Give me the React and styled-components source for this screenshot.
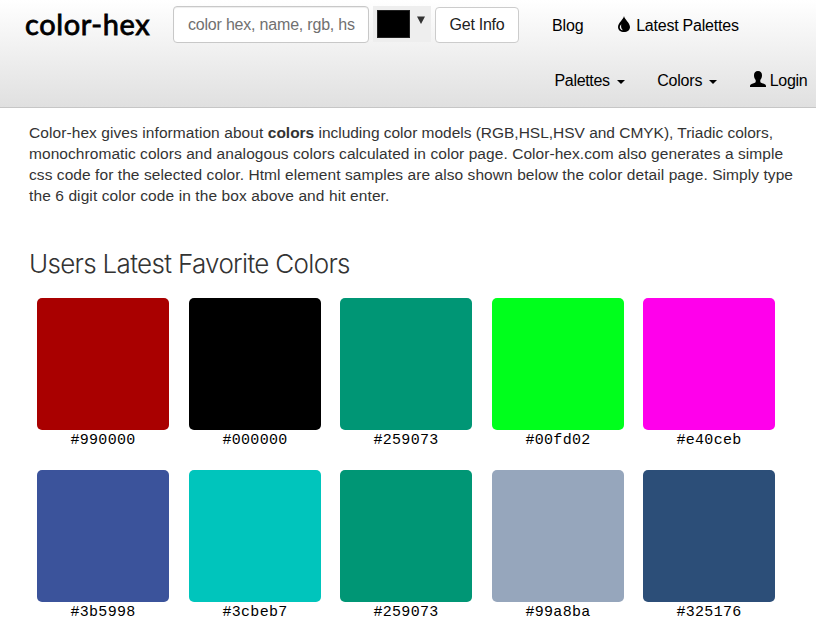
import React from "react";
import styled, { createGlobalStyle } from "styled-components";

const GlobalStyle = createGlobalStyle`
  * { box-sizing: border-box; }
  body {
    margin: 0;
    background: #fff;
    color: #333;
    font: 15.5px/21px "Liberation Sans", Arial, sans-serif;
    overflow: hidden;
  }
`;

const Page = styled.div`
  width: 816px;
  height: 630px;
  overflow: hidden;
`;

const Header = styled.header`
  height: 108px;
  border-bottom: 1px solid #c6c6c6;
  background: linear-gradient(#fff, #e0e0e0);
`;

const TopRow = styled.div`
  display: flex;
  align-items: flex-start;
  height: 53px;
  padding: 6px 0 0 25px;
`;

const Logo = styled.a`
  width: 148px;
  color: #000;
  font: 400 29px/36px Lato, sans-serif;
  letter-spacing: 0.6px;
  -webkit-text-stroke: 0.8px #000;
  white-space: nowrap;
`;

const SearchInput = styled.input`
  width: 196px;
  height: 37px;
  padding: 0 13px 0 14px;
  border: 1px solid #c8c8c8;
  border-radius: 4px;
  background: #fff;
  box-shadow: inset 0 1px 1px rgba(0, 0, 0, 0.075);
  font: 16px "Liberation Sans", Arial, sans-serif;
  letter-spacing: -0.2px;
  outline: none;
  &::placeholder { color: #707070; opacity: 1; }
`;

const Picker = styled.div`
  display: flex;
  width: 58px;
  height: 36px;
  margin: 0 4px;
  padding: 4px;
  background: #eee;
`;

const PickerPreview = styled.div`
  width: 33px;
  height: 28px;
  border: 1px solid #222;
  background: #000;
`;

const PickerArrow = styled.svg`
  width: 8px;
  height: 8px;
  margin: 6px 0 0 7px;
  fill: #333;
`;

const Button = styled.button`
  width: 84px;
  height: 36px;
  margin-top: 1px;
  padding: 0;
  border: 1px solid #ccc;
  border-radius: 4px;
  background: #fff;
  color: #222;
  font: 16px "Liberation Sans", Arial, sans-serif;
  letter-spacing: -0.25px;
`;

const NavLink = styled.a`
  display: flex;
  align-items: center;
  height: 38px;
  margin-left: ${(p) => p.$gap}px;
  color: #000;
  font-size: 16px;
  letter-spacing: ${(p) => p.$track || 0}px;
  white-space: nowrap;
  svg { flex: none; fill: #000; }
`;

const BottomRow = styled.div`
  display: flex;
  padding: 8px 0 0 554.5px;
`;

const Caret = styled.svg`
  width: 8px;
  height: 4px;
  margin: 3px 0 0 7px;
`;

const DropIcon = styled.svg`
  width: 12px;
  height: 16px;
  margin: -3px 6.5px 0 0;
`;

const UserIcon = styled.svg`
  width: 16px;
  height: 16px;
  margin: -2px 4px 0 0;
`;

const Content = styled.main`
  padding: 14px 0 0 29px;
`;

const Intro = styled.p`
  margin: 0;
`;

const Line = styled.span`
  display: block;
  white-space: nowrap;
  letter-spacing: ${(p) => p.$track}px;
`;

const Lead = styled.span`
  letter-spacing: 0.08px;
`;

const Heading = styled.h2`
  margin: 42px 0 18px;
  font: 300 26px/32px Inter, sans-serif;
  letter-spacing: -0.68px;
  white-space: nowrap;
`;

const Swatches = styled.div`
  display: grid;
  grid-template-columns: 152px 151px 152px 151px 132px;
  row-gap: 19px;
  padding-left: 8px;
`;

const Swatch = styled.div`
  width: 132px;
`;

const SwatchColor = styled.div`
  height: 132px;
  border-radius: 5px;
  background: ${(p) => p.$fill};
`;

const SwatchName = styled.div`
  height: 21px;
  color: #000;
  font: 15px/21px "Liberation Mono", "Courier New", monospace;
  letter-spacing: 0.3px;
  text-align: center;
`;

const swatches = [
  { name: "#990000", fill: "#a90000" },
  { name: "#000000", fill: "#000" },
  { name: "#259073", fill: "#009675" },
  { name: "#00fd02", fill: "#00ff1c" },
  { name: "#e40ceb", fill: "#ff00eb" },
  { name: "#3b5998", fill: "#3b539b" },
  { name: "#3cbeb7", fill: "#00c5bc" },
  { name: "#259073", fill: "#009675" },
  { name: "#99a8ba", fill: "#96a6bc" },
  { name: "#325176", fill: "#2c4e78" },
];

const DownCaret = () => (
  <Caret viewBox="0 0 8 4"><path d="M0 0h8L4 4z" /></Caret>
);

export default function App() {
  return (
    <Page>
      <GlobalStyle />
      <Header>
        <TopRow>
          <Logo>color-hex</Logo>
          <SearchInput placeholder="color hex, name, rgb, hsl" />
          <Picker>
            <PickerPreview />
            <PickerArrow viewBox="0 0 8 8"><path d="M0 .5h8L4 8z" /></PickerArrow>
          </Picker>
          <Button>Get Info</Button>
          <NavLink $gap={33} $track={-0.1}>Blog</NavLink>
          <NavLink $gap={34} $track={-0.22}>
            <DropIcon viewBox="0 0 12 16">
              <path
                fillRule="evenodd"
                d="M6 0C6.4 3 12 7 12 11c0 3-2.600 5-6 5s-6-2-6-5C0 7 5.600 3 6 0ZM3.300 8.200C2 9.500 1.400 11 2 12.300c.5 1.300 1.700 2 2.900 1.900C3.200 12.600 2.700 10.700 3.300 8.200Z"
              />
            </DropIcon>
            Latest Palettes
          </NavLink>
        </TopRow>
        <BottomRow>
          <NavLink $gap={0} $track={-0.33}>Palettes<DownCaret /></NavLink>
          <NavLink $gap={32.5} $track={-0.2}>Colors<DownCaret /></NavLink>
          <NavLink $gap={32.5} $track={-0.3}>
            <UserIcon viewBox="0 0 16 16">
              <path d="M8 0c2.600 0 4 1.700 4 4.300 0 2-.7 3.700-1.700 4.700v1.400c0 .8.5 1.100 1.400 1.500l2.700 1.200c1 .5 1.600 1.100 1.600 2v.9H0v-.9c0-.9.6-1.500 1.600-2l2.700-1.200c.9-.4 1.400-.7 1.400-1.500V9C4.700 8 4 6.300 4 4.300 4 1.700 5.400 0 8 0Z" />
            </UserIcon>
            Login
          </NavLink>
        </BottomRow>
      </Header>
      <Content>
        <Intro>
          <Line $track={-0.02}>
            <Lead>Color-hex gives information about </Lead>
            <b>colors</b> including color models (RGB,HSL,HSV and CMYK), Triadic colors,
          </Line>
          <Line $track={0.06}>
            monochromatic colors and analogous colors calculated in color page. Color-hex.com also generates a simple
          </Line>
          <Line $track={0.07}>
            css code for the selected color. Html element samples are also shown below the color detail page. Simply type
          </Line>
          <Line $track={0.1}>the 6 digit color code in the box above and hit enter.</Line>
        </Intro>
        <Heading>Users Latest Favorite Colors</Heading>
        <Swatches>
          {swatches.map((s, i) => (
            <Swatch key={i}>
              <SwatchColor $fill={s.fill} />
              <SwatchName>{s.name}</SwatchName>
            </Swatch>
          ))}
        </Swatches>
      </Content>
    </Page>
  );
}
